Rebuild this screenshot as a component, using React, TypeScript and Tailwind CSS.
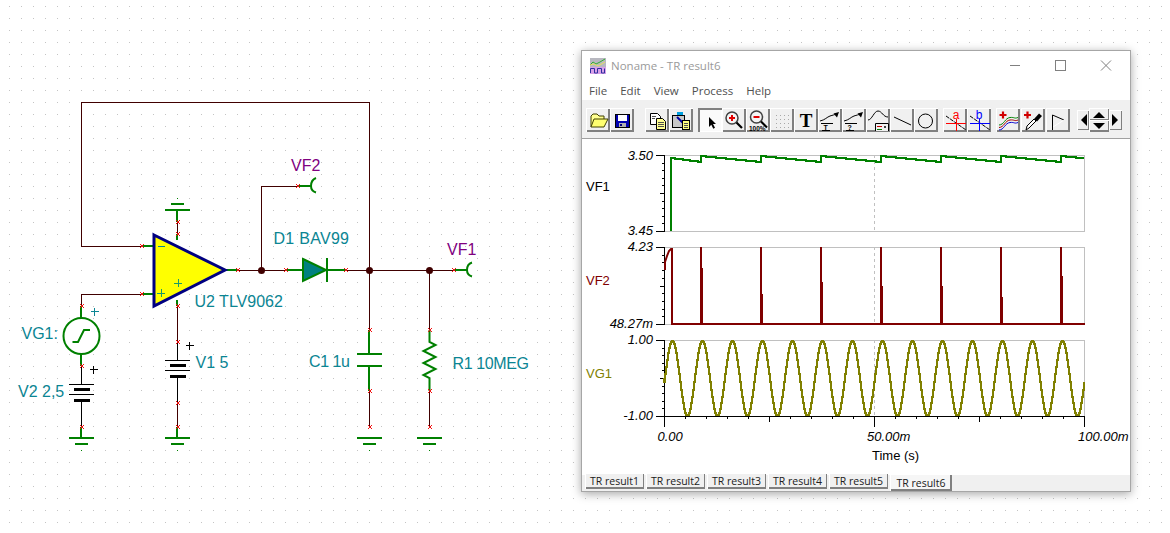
import type { ReactNode } from 'react';

const WIRE = '#400000';
const LEAD = '#008000';
const LABEL = '#0b8593';
const ARIAL = "font-['Liberation_Sans',Arial,sans-serif]";

function Wire({ d, color = WIRE }: { d: string; color?: string }) {
  return <path d={d} fill="none" stroke={color} strokeWidth={1} shapeRendering="crispEdges" />;
}

function Lead({ d }: { d: string }) {
  return <path d={d} fill="none" stroke={LEAD} strokeWidth={2} shapeRendering="crispEdges" />;
}

function Pin({ x, y }: { x: number; y: number }) {
  return <path d={`M${x - 2} ${y - 2}l4 4m0 -4l-4 4`} stroke="#f01010" strokeWidth={1} fill="none" />;
}

function Node({ x, y }: { x: number; y: number }) {
  return <circle cx={x} cy={y} r={3.5} fill={WIRE} />;
}

function Ground({ x, y, flip = false }: { x: number; y: number; flip?: boolean }) {
  const s = flip ? -1 : 1;
  return (
    <g shapeRendering="crispEdges">
      <rect x={x - 12.5} y={y - 1} width={25} height={2} fill={LEAD} />
      <rect x={x - 6.5} y={y + s * 6 - 1} width={13} height={2} fill={LEAD} />
      <rect x={x - 0.5} y={y + s * 12} width={1} height={1} fill={LEAD} />
    </g>
  );
}

function Battery({ x, y }: { x: number; y: number }) {
  return (
    <g fill="#000" shapeRendering="crispEdges">
      <rect x={x - 12.5} y={y} width={25} height={1} />
      <rect x={x - 8} y={y + 4} width={16} height={3} />
      <rect x={x - 12.5} y={y + 10} width={25} height={1} />
      <rect x={x - 8} y={y + 15} width={16} height={3} />
    </g>
  );
}

function Plus({ x, y, color }: { x: number; y: number; color: string }) {
  return <path d={`M${x - 4} ${y}h8M${x} ${y - 4}v8`} stroke={color} strokeWidth={1} fill="none" shapeRendering="crispEdges" />;
}

function Label({ x, y, color = LABEL, width, children }: { x: number; y: number; color?: string; width?: number; children: ReactNode }) {
  return (
    <text x={x} y={y} fill={color} fontSize={16} textLength={width} className={ARIAL}>
      {children}
    </text>
  );
}

function Schematic() {
  return (
    <svg className="absolute inset-0" width={1170} height={533}>
      <defs>
        <pattern id="dots" x={9} y={6} width={12} height={12} patternUnits="userSpaceOnUse">
          <rect width={1} height={1} fill="#c4c4c4" />
        </pattern>
      </defs>
      <rect width={1170} height={533} fill="url(#dots)" />

      <Wire d="M142 246.5H81.5V102.5H369.5V270" />
      <Wire d="M142 294.5H81.5V306" />
      <Wire d="M238 270.5H346M261.5 270V186.5H298" />
      <Wire d="M346 270.5H454M369.5 270V330M429.5 270V330" />
      <Wire d="M177.5 222V234M177.5 306V342M177.5 403V427" />
      <Wire d="M369.5 391V427M429.5 391V427" />
      <Wire d="M81.5 366V385M81.5 401V427M177.5 342V360M177.5 378V403" color="#000" />

      <Lead d="M142 246H154M142 294H154M226 270H238" />
      <Lead d="M177 211V222M177 234V240M177 300V306" />
      <Lead d="M81 306V319M81 354V366M81 427V438M177 427V438" />
      <Lead d="M298 186H311M454 270H467" />
      <path d="M316 178Q311 180 311 186Q311 191 316 192.5M472 262.5Q467 264 467 270Q467 275 472 276.5" fill="none" stroke={LEAD} strokeWidth={2} />

      <polygon points="154,235 225,270 154,306" fill="#ffff00" stroke="#000080" strokeWidth={3} />
      <path d="M158 246.5h7" stroke={LABEL} strokeWidth={1} shapeRendering="crispEdges" />
      <Plus x={161} y={293} color="#1a9a6a" />
      <Plus x={178} y={283} color="#1a9a6a" />
      <Plus x={94.5} y={311.5} color={LABEL} />
      <Plus x={93.5} y={369.5} color="#000" />
      <Plus x={189.5} y={345.5} color="#000" />

      <circle cx={81.5} cy={336} r={18} fill="#fff" stroke={LEAD} strokeWidth={2} />
      <path d="M72.5 342H78L84 330H90" fill="none" stroke={LEAD} strokeWidth={2} />

      <Battery x={81.5} y={384} />
      <Battery x={177.5} y={360} />
      <Ground x={81.5} y={438} />
      <Ground x={177.5} y={438} />
      <Ground x={177.5} y={210} flip />
      <Ground x={369.5} y={438} />
      <Ground x={429.5} y={438} />

      <Lead d="M286 270H303M327 270H346" />
      <polygon points="303,259 326,270 303,281" fill="#008080" stroke={LEAD} strokeWidth={2} />
      <path d="M327 258V282" stroke={LEAD} strokeWidth={2} shapeRendering="crispEdges" />

      <Lead d="M369 330V354M369 366V391" />
      <path d="M357 354h25M357 366h25" stroke={LEAD} strokeWidth={2} shapeRendering="crispEdges" />
      <path
        d="M429.5 330V342L435.5 345L423.5 351L435.5 357L423.5 363L435.5 369L423.5 375L429.5 378V391"
        fill="none"
        stroke={LEAD}
        strokeWidth={2}
      />

      <Node x={261.5} y={270.5} />
      <Node x={369.5} y={270.5} />
      <Node x={429.5} y={270.5} />

      {[
        [142, 246], [142, 294], [82, 306], [82, 366], [82, 427], [178, 222], [178, 234], [178, 306],
        [178, 342], [178, 403], [178, 427], [238, 270], [286, 270], [346, 270], [298, 186], [454, 270],
        [370, 330], [370, 391], [370, 427], [430, 330], [430, 391], [430, 427],
      ].map(([x, y]) => (
        <Pin key={`${x}-${y}`} x={x} y={y} />
      ))}

      <Label x={291} y={171} color="#800080">VF2</Label>
      <Label x={447} y={255} color="#800080">VF1</Label>
      <Label x={273.5} y={244} width={75.5}>D1 BAV99</Label>
      <Label x={194.5} y={307}>U2 TLV9062</Label>
      <Label x={21.5} y={339}>VG1:</Label>
      <Label x={18} y={397}>V2 2,5</Label>
      <Label x={195.5} y={368}>V1 5</Label>
      <Label x={309} y={367} width={41}>C1 1u</Label>
      <Label x={452.5} y={369} width={76.5}>R1 10MEG</Label>
    </svg>
  );
}

function ToolButton({ icon, pressed = false }: { icon: ReactNode; pressed?: boolean }) {
  return (
    <div
      className={
        pressed
          ? 'w-6 h-6 bg-[#fafafa] shadow-[inset_2px_2px_0_#808080,inset_-1px_-1px_0_#ffffff]'
          : 'w-6 h-6 bg-[#f0f0f0] shadow-[inset_1px_1px_0_#ffffff,inset_-2px_-2px_0_#808080]'
      }
    >
      <svg viewBox="0 0 24 24" className="w-6 h-6 block">
        {icon}
      </svg>
    </div>
  );
}

const CurveArrow = (
  <>
    <path d="M2 13C7 12 9 9 12 8S16 7 18 6" fill="none" stroke="#000" strokeWidth={1} />
    <path d="M21 4L15.5 5.5L19 9.5Z" fill="#000" />
    <path d="M3 15.5H15M4 22.5H12" fill="none" stroke="#000" strokeWidth={1} shapeRendering="crispEdges" />
  </>
);

const icons: Record<string, ReactNode> = {
  open: (
    <>
      <path d="M5 19V8L7 6H11L13 8H18V11" fill="#ffff90" stroke="#404000" />
      <path d="M5 19L8 11H22L18 19Z" fill="#ffff70" stroke="#404000" />
    </>
  ),
  save: (
    <>
      <rect x={5.5} y={6.5} width={14} height={13} fill="#0000b0" stroke="#000" />
      <rect x={8} y={7} width={9} height={6} fill="#fff" />
      <rect x={9} y={15} width={7} height={4} fill="#b0b0b0" />
      <rect x={10} y={16} width={2} height={2} fill="#000080" />
    </>
  ),
  copy: (
    <>
      <path d="M5.5 5.5H12.5L15.5 8.5V16.5H5.5Z" fill="#fff" stroke="#000" />
      <path d="M11.5 10.5H17.5L20.5 13.5V21.5H11.5Z" fill="#ffff90" stroke="#000" />
      <path d="M7 8h4M7 10h3M13 14h6M13 16h6M13 18h6" stroke="#505050" shapeRendering="crispEdges" />
    </>
  ),
  paste: (
    <>
      <rect x={3.5} y={7.5} width={12} height={12} fill="#c8c8c8" stroke="#000" />
      <rect x={8} y={4} width={6} height={3} fill="#00a0e0" />
      <path d="M8 9L14 15" stroke="#0000a0" strokeWidth={2} />
      <rect x={13.5} y={12.5} width={7} height={9} fill="#ffff80" stroke="#000" />
      <path d="M15 15h4M15 17h4M15 19h4" stroke="#505050" shapeRendering="crispEdges" />
    </>
  ),
  arrow: <path d="M11 9V19L13.3 16.7L15.3 20.7L17 19.7L15 16H18Z" fill="#000" />,
  zoomIn: (
    <>
      <circle cx={10} cy={10} r={6} fill="#f4f4f4" stroke="#404040" strokeWidth={1.5} />
      <path d="M7 10h6M10 7v6" stroke="#e00000" strokeWidth={2} />
      <path d="M14.5 14.5L20 20" stroke="#000" strokeWidth={2.2} />
    </>
  ),
  zoomOut: (
    <>
      <circle cx={10.5} cy={9} r={6} fill="#f4f4f4" stroke="#404040" strokeWidth={1.5} />
      <path d="M7.5 9h6" stroke="#e00000" strokeWidth={2} />
      <path d="M15 13.5L21 19.5" stroke="#000" strokeWidth={2.2} />
      <text x={3} y={22.5} fontSize={6.5} fontWeight={700} fill="#000" className={ARIAL}>100%</text>
    </>
  ),
  grid: (
    <g fill="#a8a8a8">
      {[6, 10, 14, 18].flatMap((x) => [7, 11, 15, 19].map((y) => <rect key={`${x}${y}`} x={x} y={y} width={1} height={1} />))}
    </g>
  ),
  text: (
    <text x={12} y={18.5} textAnchor="middle" fontSize={19} fontWeight={700} fill="#000" className="font-['Liberation_Serif',serif]">T</text>
  ),
  curveText: (
    <>
      {CurveArrow}
      <text x={5.5} y={22} fontSize={7} fontWeight={700} fill="#000" className={ARIAL}>T</text>
    </>
  ),
  curveHelp: (
    <>
      {CurveArrow}
      <text x={5.5} y={22} fontSize={7} fontWeight={700} fill="#000" className={ARIAL}>?</text>
    </>
  ),
  legend: (
    <>
      <path d="M2 12C6 12 8 3 12 3S17 9 22 9" fill="none" stroke="#000" />
      <path d="M9.5 23V15.5H22.5V23" fill="#f0f0f0" stroke="#000" />
      <path d="M11 18h5" stroke="#c00000" shapeRendering="crispEdges" />
      <path d="M11 21h5" stroke="#008000" shapeRendering="crispEdges" />
      <path d="M18 18l2 2m0-2l-2 2" stroke="#404040" />
    </>
  ),
  line: <path d="M4 9L21 17" stroke="#000" strokeWidth={1} />,
  circle: <circle cx={11.5} cy={13} r={7} fill="none" stroke="#000" strokeWidth={1} />,
  cursorA: (
    <>
      <path d="M3 8L23 22" stroke="#000" strokeDasharray="4 1" />
      <path d="M3 15.5H23M13 11V23" stroke="#ff0000" shapeRendering="crispEdges" />
      <text x={13} y={11} textAnchor="middle" fontSize={12} fill="#ff0000" className={ARIAL}>a</text>
    </>
  ),
  cursorB: (
    <>
      <path d="M3 8L23 22" stroke="#000" strokeDasharray="4 1" />
      <path d="M3 15.5H23M12 11V23" stroke="#0000ff" shapeRendering="crispEdges" />
      <text x={12} y={11} textAnchor="middle" fontSize={12} fill="#0000ff" className={ARIAL}>b</text>
    </>
  ),
  addCurve: (
    <>
      <path d="M3.5 7h7M7 3.5v7" stroke="#d00000" strokeWidth={2.2} />
      <path d="M3 17C8 17 9 10 14 9.5S18 11 22 9.5" fill="none" stroke="#008000" />
      <path d="M3 19.5C8 19.5 9 12.5 14 12S18 13.5 22 12" fill="none" stroke="#a00000" />
      <path d="M3 22C8 22 9 15 14 14.5S18 16 22 14.5" fill="none" stroke="#0000d0" />
    </>
  ),
  probe: (
    <>
      <path d="M3 7h7M6.5 3.5v7" stroke="#d00000" strokeWidth={2.2} />
      <path d="M5 22L8 20L15 13L13 11L6 18Z" fill="#fff" stroke="#000" />
      <path d="M13 11L18 5.5L21 8L16 13.5Z" fill="#000" />
    </>
  ),
  marker: (
    <>
      <path d="M6.5 22V7L18 12" fill="none" stroke="#000" />
      <path d="M7 19L18 12" stroke="#fff" />
    </>
  ),
};

function Toolbar() {
  const groups = [
    { cls: 'flex mr-[11px]', items: ['open', 'save'] },
    { cls: 'flex mr-[5px]', items: ['copy', 'paste'] },
    { cls: 'flex mr-[5px]', items: ['arrow', 'zoomIn', 'zoomOut', 'grid', 'text', 'curveText', 'curveHelp', 'legend', 'line', 'circle'] },
    { cls: 'flex mr-[5px]', items: ['cursorA', 'cursorB'] },
    { cls: 'flex gap-px mr-[7px]', items: ['addCurve', 'probe', 'marker'] },
  ];
  return (
    <div className="h-[39px] bg-[#f0f0f0] border-b border-[#a0a0a0] pl-1 pt-2 flex items-start">
      {groups.map((g) => (
        <div key={g.items[0]} className={g.cls}>
          {g.items.map((name) => (
            <ToolButton key={name} icon={icons[name]} pressed={name === 'arrow'} />
          ))}
        </div>
      ))}
      <div className="flex items-center h-6">
        <div className="w-3 h-5 bg-[#f0f0f0] shadow-[inset_1px_1px_0_#ffffff,inset_-1px_-1px_0_#808080] flex items-center justify-center">
          <svg width={7} height={12}><path d="M7 0V12L1 6Z" fill="#000" /></svg>
        </div>
        <div className="w-5 h-6 flex flex-col">
          <div className="h-3 shadow-[inset_1px_1px_0_#ffffff,inset_-1px_-1px_0_#808080] flex items-center justify-center">
            <svg width={12} height={7}><path d="M0 7H12L6 1Z" fill="#000" /></svg>
          </div>
          <div className="h-3 shadow-[inset_1px_1px_0_#ffffff,inset_-1px_-2px_0_#808080] flex items-center justify-center">
            <svg width={12} height={7}><path d="M0 0H12L6 6Z" fill="#000" /></svg>
          </div>
        </div>
        <div className="w-[13px] h-5 bg-[#f0f0f0] shadow-[inset_1px_1px_0_#ffffff,inset_-1px_-1px_0_#808080] flex items-center justify-center">
          <svg width={7} height={12}><path d="M0 0V12L6 6Z" fill="#000" /></svg>
        </div>
      </div>
    </div>
  );
}

const PERIOD = 60;
const spikes = [701, 761, 821, 881, 941, 1001, 1061];
const secondary = [268, 294, 282, 286, 286, 297, 276];

function vf1Points() {
  const pts: string[] = ['671,231', '671,158'];
  let last = 158;
  for (let x = 672; x <= 1084; x++) {
    const since = spikes.filter((s) => s <= x).pop();
    const y = since === undefined
      ? 158 + ((x - 671) / 30) * 4
      : x - since < 4
        ? 155.5
        : 156 + ((x - since) / PERIOD) * 6;
    const r = Math.round(y);
    if (r !== last) {
      pts.push(`${x},${last}`, `${x},${r}`);
      last = r;
    }
  }
  pts.push(`1084,${last}`);
  return pts.join(' ');
}

// square steps, the trace in the reference is not antialiased
function vg1Points() {
  const pts: string[] = [];
  let last = 378;
  for (let x = 664; x <= 1084; x++) {
    const r = Math.round(378.3 - 37.5 * Math.sin(((x - 664.5) * 2 * Math.PI) / 30));
    pts.push(`${x},${last}`, `${x},${r}`);
    last = r;
  }
  return pts.join(' ');
}

function YAxis({ top, bottom }: { top: number; bottom: number }) {
  const step = (bottom - top) / 10;
  return (
    <g shapeRendering="crispEdges" stroke="#000" strokeWidth={1}>
      <path d={`M664.5 ${top}V${bottom + 1}`} />
      {Array.from({ length: 11 }, (_, i) => {
        const y = Math.round(top + step * i) + 0.5;
        const len = i === 0 || i === 10 ? 8 : i === 5 ? 4 : 2;
        return <path key={i} d={`M664 ${y}h${-len}`} />;
      })}
    </g>
  );
}

function Frame({ top, bottom }: { top: number; bottom: number }) {
  return (
    <g shapeRendering="crispEdges" fill="none" strokeWidth={1}>
      <path d={`M664 ${top + 0.5}H1084.5V${bottom + 0.5}H664`} stroke="#c0c0c0" />
      <path d={`M874.5 ${top}V${bottom}`} stroke="#c0c0c0" strokeDasharray="3 3" />
    </g>
  );
}

function AxisText({ x, y, anchor = 'end', children }: { x: number; y: number; anchor?: 'end' | 'start'; children: ReactNode }) {
  return (
    <text x={x} y={y} textAnchor={anchor} fontSize={13} fill="#000" className={`${ARIAL} italic`}>
      {children}
    </text>
  );
}

function Chart() {
  return (
    <svg viewBox="582 139 548 336" width={548} height={336} className="block bg-white">
      <Frame top={155} bottom={231} />
      <Frame top={247} bottom={324} />
      <Frame top={340} bottom={416} />
      <YAxis top={155} bottom={231} />
      <YAxis top={247} bottom={324} />
      <YAxis top={340} bottom={416} />

      <polyline points={vf1Points()} fill="none" stroke="#008000" strokeWidth={2} shapeRendering="crispEdges" />

      <g shapeRendering="crispEdges" fill="#800000">
        <rect x={671} y={323} width={414} height={2} />
        {spikes.map((x, i) => (
          <g key={x}>
            <rect x={x - 1} y={247} width={2} height={77} />
            <rect x={x + 1} y={secondary[i]} width={1} height={324 - secondary[i]} />
          </g>
        ))}
      </g>
      <path d="M665 270V262L667 256L669 251L671 249H672V324" fill="none" stroke="#800000" strokeWidth={2} />

      <polyline points={vg1Points()} fill="none" stroke="#808000" strokeWidth={2} shapeRendering="crispEdges" />

      <g shapeRendering="crispEdges" stroke="#000" strokeWidth={1}>
        <path d="M664 416.5H1085" />
        {Array.from({ length: 21 }, (_, i) => {
          const x = 664.5 + i * 21;
          const len = i % 10 === 0 ? 10 : i % 5 === 0 ? 5 : 2;
          return <path key={i} d={`M${x} 416V${417 + len}`} />;
        })}
      </g>

      <AxisText x={653} y={160}>3.50</AxisText>
      <AxisText x={653} y={235}>3.45</AxisText>
      <AxisText x={653} y={251}>4.23</AxisText>
      <AxisText x={653} y={328}>48.27m</AxisText>
      <AxisText x={653} y={344}>1.00</AxisText>
      <AxisText x={653} y={420}>-1.00</AxisText>
      <AxisText x={657.5} y={441} anchor="start">0.00</AxisText>
      <AxisText x={867} y={441} anchor="start">50.00m</AxisText>
      <AxisText x={1078} y={441} anchor="start">100.00m</AxisText>

      <text x={872} y={460} fontSize={13} fill="#000" className={ARIAL}>Time (s)</text>
      <text x={586} y={191} fontSize={13} fill="#000" className={ARIAL}>VF1</text>
      <text x={586} y={285} fontSize={13} fill="#800000" className={ARIAL}>VF2</text>
      <text x={586} y={378} fontSize={13} fill="#808000" className={ARIAL}>VG1</text>
    </svg>
  );
}

const tabs = ['TR result1', 'TR result2', 'TR result3', 'TR result4', 'TR result5'];

function Tabs() {
  return (
    <div className="h-4 bg-[#f0f0f0] pl-[3px] flex items-start gap-[2px] font-['Open_Sans',sans-serif] text-[10.5px]">
      {tabs.map((t) => (
        <div
          key={t}
          className="w-[59px] h-4 -mt-0.5 relative bg-[#f0f0f0] text-[#202020] text-center leading-[16px] shadow-[inset_1px_1px_0_#ffffff,inset_-1px_-2px_0_#808080]"
        >
          {t}
        </div>
      ))}
      <div className="w-[62px] h-4 relative bg-[#f6f6f6] text-[#202020] text-center leading-[16px] shadow-[inset_1px_0_0_#ffffff,inset_-2px_-2px_0_#808080]">
        TR result6
      </div>
    </div>
  );
}

function AppIcon() {
  return (
    <svg width={16} height={16} viewBox="0 0 16 16" className="block">
      <rect width={16} height={9} fill="#b8b8c0" />
      <rect y={9} width={16} height={7} fill="#d8a0e8" />
      <path d="M0 7L3 4L6 6L10 4L15 1" fill="none" stroke="#30b030" />
      <path d="M0 7L4 6L8 8L15 4" fill="none" stroke="#e8e060" />
      <path d="M0.5 15V10.5H4.5V15H7.5V10.5H11.5V15H14.5V10.5" fill="none" stroke="#3030a0" />
    </svg>
  );
}

function ResultWindow() {
  return (
    <div className="absolute left-[581px] top-[50px] w-[550px] h-[442px] flex flex-col bg-white border border-[#a6a6a6] shadow-[0_2px_9px_rgba(0,0,0,0.35)]">
      <div className="h-[30px] flex items-center justify-between pl-2 pr-[18px] font-['Open_Sans',sans-serif] text-[11.5px] text-[#9a9a9a]">
        <div className="flex items-center gap-[5px]">
          <AppIcon />
          <span>Noname - TR result6</span>
        </div>
        <svg width={102} height={16} viewBox="0 0 102 16" className="block">
          <path d="M0 7.5H10" stroke="#808080" shapeRendering="crispEdges" />
          <rect x={45.5} y={2.5} width={10} height={10} fill="none" stroke="#808080" shapeRendering="crispEdges" />
          <path d="M91 2.5L101 12.5M101 2.5L91 12.5" stroke="#808080" />
        </svg>
      </div>
      <div className="h-[19px] flex items-center gap-[13px] pl-[7px] font-['Open_Sans',sans-serif] text-[11.5px] text-[#505050]">
        <span>File</span>
        <span>Edit</span>
        <span>View</span>
        <span>Process</span>
        <span>Help</span>
      </div>
      <Toolbar />
      <Chart />
      <Tabs />
    </div>
  );
}

export default function App() {
  return (
    <div className="relative w-[1170px] h-[533px] overflow-hidden bg-white">
      <Schematic />
      <ResultWindow />
    </div>
  );
}
